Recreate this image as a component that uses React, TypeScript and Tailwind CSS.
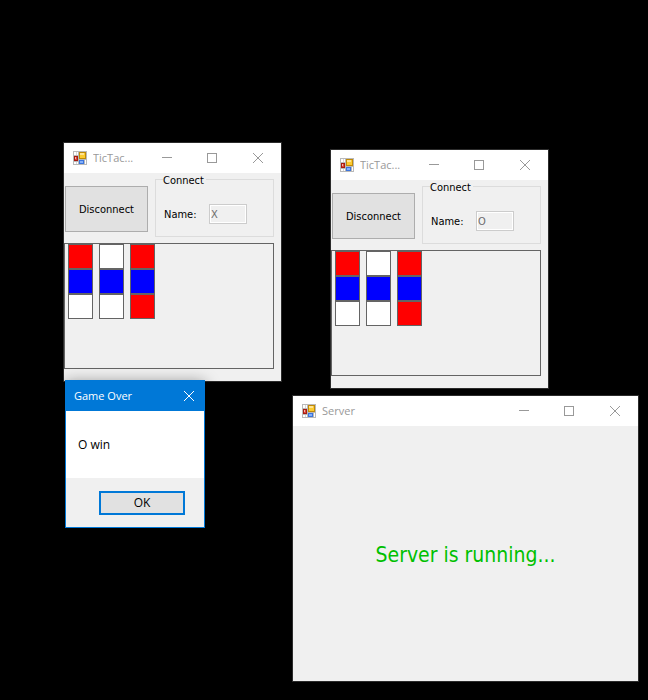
import type { ReactNode } from "react";

function FormIcon() {
  return (
    <svg width="14" height="14" viewBox="0 0 14 14" shapeRendering="crispEdges" aria-hidden="true" className="shrink-0">
      <rect width="14" height="14" fill="#b9b9b9" />
      <rect x="1" y="1" width="4" height="3" fill="#fff" />
      <rect x="1" y="11" width="4" height="2" fill="#fff" />
      <rect x="3" y="1" width="1" height="3" fill="#d8d8d8" />
      <rect x="3" y="11" width="1" height="2" fill="#d8d8d8" />
      <rect x="12" y="9" width="1" height="4" fill="#fff" />
      <rect x="6" y="1" width="7" height="7" fill="#c08a08" />
      <rect x="7" y="2" width="5" height="5" fill="#fccb30" />
      <rect x="7" y="2" width="4" height="2" fill="#ffe391" />
      <rect x="1" y="5" width="4" height="5" fill="#a81c10" />
      <rect x="2" y="6" width="2" height="3" fill="#dc4a3c" />
      <rect x="2" y="6" width="1" height="2" fill="#f6b4ac" />
      <rect x="6" y="9" width="5" height="4" fill="#3c74dc" />
      <rect x="7" y="10" width="3" height="2" fill="#84b0fa" />
    </svg>
  );
}

function CloseGlyph() {
  return (
    <svg width="10" height="10" viewBox="0 0 10 10" stroke="currentColor" fill="none" aria-hidden="true">
      <path d="M0 0L10 10M10 0L0 10" />
    </svg>
  );
}

function TitleBar({ title }: { title: string }) {
  return (
    <header className="flex h-[30px] items-center bg-white pl-[9px] text-[#999999]">
      <FormIcon />
      <h2 className="ml-1.5 min-w-0 grow truncate leading-4">{title}</h2>
      <button type="button" aria-label="Minimize" className="flex h-full w-[45px] shrink-0 items-center justify-center pr-0.5">
        <svg width="10" height="10" viewBox="0 0 10 10" fill="currentColor" shapeRendering="crispEdges">
          <rect y="4" width="10" height="1" />
        </svg>
      </button>
      <button type="button" aria-label="Maximize" className="flex h-full w-[45px] shrink-0 items-center justify-center pr-0.5">
        <svg width="10" height="10" viewBox="0 0 10 10" fill="none" stroke="currentColor" shapeRendering="crispEdges">
          <rect x="0.5" y="0.5" width="9" height="9" />
        </svg>
      </button>
      <button type="button" aria-label="Close" className="flex h-full w-[46px] shrink-0 items-center justify-center">
        <CloseGlyph />
      </button>
    </header>
  );
}

function AppWindow({ title, place, children }: { title: string; place: string; children: ReactNode }) {
  return (
    <section className={`absolute flex flex-col border border-[#2b2b2b] bg-[#f0f0f0] ${place}`}>
      <TitleBar title={title} />
      {children}
    </section>
  );
}

const cells = [
  "bg-[#ff0000]", "bg-white", "bg-[#ff0000]",
  "bg-[#0000ff]", "bg-[#0000ff]", "bg-[#0000ff]",
  "bg-white", "bg-white", "bg-[#ff0000]",
];

function GameWindow({ player, place }: { player: string; place: string }) {
  const id = `name-${player}`;
  return (
    <AppWindow title="TicTac..." place={place}>
      <div className="flex pt-1.5 pr-[7px] pl-px font-['DejaVu_Sans_Condensed','DejaVu_Sans',sans-serif] text-[11px]">
        <button type="button" className="mt-[7px] h-[46px] w-[83px] border border-[#adadad] bg-[#e1e1e1] pt-0.5">
          Disconnect
        </button>
        <div role="group" aria-label="Connect" className="ml-[7px] h-[58px] grow border border-[#dcdcdc] pr-[26px] pl-[7px]">
          <div className="-mt-[7px] flex">
            <span className="bg-[#f0f0f0] pr-0.5 leading-4">Connect</span>
          </div>
          <div className="mt-[15px] flex items-center justify-between pl-px">
            <label htmlFor={id} className="pt-0.5">Name:</label>
            <input
              id={id}
              disabled
              defaultValue={player}
              className="h-5 w-[38px] border border-[#cccccc] bg-[#f0f0f0] px-px text-[#6d6d6d] outline outline-1 -outline-offset-2 outline-white"
            />
          </div>
        </div>
      </div>
      <div className="mt-1.5 mr-[7px] mb-3 grow border border-[#646464] pl-[3px]">
        <div className="grid w-max grid-cols-3 gap-x-1.5">
          {cells.map((fill, i) => (
            <button key={i} type="button" aria-label={`Cell ${i + 1}`} className={`size-[25px] border border-[#646464] ${fill}`} />
          ))}
        </div>
      </div>
    </AppWindow>
  );
}

export default function App() {
  return (
    <main className="relative min-h-screen w-full overflow-hidden bg-black font-['Open_Sans','Noto_Sans',sans-serif] text-[11px] text-black">
      <GameWindow player="X" place="left-[63px] top-[142px] w-[219px] h-[240px]" />
      <GameWindow player="O" place="left-[330px] top-[149px] w-[219px] h-[240px]" />

      <AppWindow title="Server" place="left-[292px] top-[395px] w-[347px] h-[287px]">
        <p className="flex grow items-center justify-center pt-1 font-['DejaVu_Sans_Condensed','DejaVu_Sans',sans-serif] text-[21px] text-[#00c000]">
          Server is running...
        </p>
      </AppWindow>

      <section
        role="dialog"
        aria-label="Game Over"
        className="absolute top-[380px] left-[65px] flex h-[148px] w-[140px] flex-col border border-[#0078d7] bg-[#f0f0f0] shadow-[0_2px_14px_rgba(0,0,0,0.4)]"
      >
        <header className="flex h-[30px] items-center justify-between bg-[#0078d7] pr-2.5 pl-2 text-white">
          <h2>Game Over</h2>
          <button type="button" aria-label="Close">
            <CloseGlyph />
          </button>
        </header>
        <p className="flex h-[67px] items-center bg-white pl-3 text-[12px]">O win</p>
        <div className="flex grow items-center justify-end pr-[19px]">
          <button type="button" className="h-6 w-[86px] border-2 border-[#0078d7] bg-[#e1e1e1] text-[12px] leading-5">
            OK
          </button>
        </div>
      </section>
    </main>
  );
}
